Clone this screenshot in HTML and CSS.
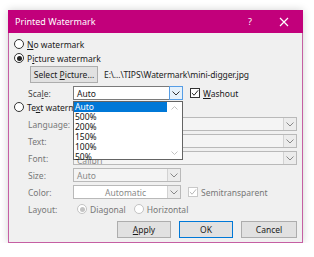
FILE: index.html
```html
<!DOCTYPE html>
<html>
<head>
<meta charset="utf-8">
<link rel="stylesheet" href="styles.css">
</head>
<body>
<div class="dialog">
  <div class="titlebar">
    <span class="title">Printed Watermark</span>
    <span class="tb-help">?</span>
    <svg class="tb-close" width="10" height="10" viewBox="0 0 10 10"><path d="M1 1L9 9M9 1L1 9" stroke="#fff" stroke-width="1.2"/></svg>
  </div>
  <div class="content">
    <div class="row radio-row">
      <span class="radio"></span><span><u>N</u>o watermark</span>
    </div>
    <div class="row radio-row">
      <span class="radio on"></span><span>P<u>i</u>cture watermark</span>
    </div>
    <div class="row pic-row">
      <button class="btn sel-btn">Select <u>P</u>icture...</button>
      <span class="path">E:\...\TIPS\Watermark\mini-digger.jpg</span>
    </div>
    <div class="row field-row">
      <span class="lbl">Sca<u>l</u>e:</span>
      <div class="combo scale active">
        <span class="cval">Auto</span>
        <span class="carrow hot"><svg width="8" height="5" viewBox="0 0 8 5"><path d="M0.5 0.5L4 4L7.5 0.5" fill="none" stroke="#333" stroke-width="1"/></svg></span>
      </div>
      <span class="check on"><svg width="9" height="8" viewBox="0 0 9 8"><path d="M1 4L3.5 6.5L8 1" fill="none" stroke="#222" stroke-width="1.1"/></svg></span>
      <span><u>W</u>ashout</span>
    </div>
    <div class="row radio-row">
      <span class="radio"></span><span class="clip-txt">Te<u>x</u>t waterma</span>
    </div>
    <div class="row field-row dis">
      <span class="lbl">Language:</span>
      <div class="combo wide"><span class="cval"></span><span class="carrow"><svg width="8" height="5" viewBox="0 0 8 5"><path d="M0.5 0.5L4 4L7.5 0.5" fill="none" stroke="#888" stroke-width="1"/></svg></span></div>
    </div>
    <div class="row field-row dis">
      <span class="lbl">Text:</span>
      <div class="combo wide"><span class="cval"></span><span class="carrow"><svg width="8" height="5" viewBox="0 0 8 5"><path d="M0.5 0.5L4 4L7.5 0.5" fill="none" stroke="#888" stroke-width="1"/></svg></span></div>
    </div>
    <div class="row field-row dis">
      <span class="lbl">Font:</span>
      <div class="combo wide"><span class="cval font-val">Calibri</span><span class="carrow"><svg width="8" height="5" viewBox="0 0 8 5"><path d="M0.5 0.5L4 4L7.5 0.5" fill="none" stroke="#888" stroke-width="1"/></svg></span></div>
    </div>
    <div class="row field-row dis">
      <span class="lbl">Size:</span>
      <div class="combo short"><span class="cval">Auto</span><span class="carrow"><svg width="8" height="5" viewBox="0 0 8 5"><path d="M0.5 0.5L4 4L7.5 0.5" fill="none" stroke="#888" stroke-width="1"/></svg></span></div>
    </div>
    <div class="row field-row dis">
      <span class="lbl">Color:</span>
      <div class="combo short white"><span class="cval center">Automatic</span><span class="carrow"><svg width="8" height="5" viewBox="0 0 8 5"><path d="M0.5 0.5L4 4L7.5 0.5" fill="none" stroke="#888" stroke-width="1"/></svg></span></div>
      <span class="check dim"><svg width="9" height="8" viewBox="0 0 9 8"><path d="M1 4L3.5 6.5L8 1" fill="none" stroke="#b5b5b5" stroke-width="1.1"/></svg></span>
      <span>Semitransparent</span>
    </div>
    <div class="row field-row dis">
      <span class="lbl">Layout:</span>
      <span class="layout-opt"><span class="radio dim on"></span>Diagonal</span>
      <span class="layout-opt"><span class="radio dim"></span>Horizontal</span>
    </div>
    <div class="row btn-row">
      <button class="btn act"><u>A</u>pply</button>
      <button class="btn act def">OK</button>
      <button class="btn act cancel">Cancel</button>
    </div>
  </div>
  <div class="droplist">
    <div class="items">
      <div class="item selected">Auto</div>
      <div class="item">500%</div>
      <div class="item">200%</div>
      <div class="item">150%</div>
      <div class="item">100%</div>
      <div class="item">50%</div>
    </div>
    <div class="scrollbar">
      <svg width="7" height="4" viewBox="0 0 7 4"><path d="M0.5 3.5L3.5 0.5L6.5 3.5" fill="none" stroke="#c2c2c2" stroke-width="1"/></svg>
      <svg width="7" height="4" viewBox="0 0 7 4"><path d="M0.5 0.5L3.5 3.5L6.5 0.5" fill="none" stroke="#c2c2c2" stroke-width="1"/></svg>
    </div>
  </div>
</div>
</body>
</html>
```
FILE: styles.css
```css
* { box-sizing: border-box; }
html, body { margin: 0; padding: 0; background: #fff; }
body {
  font-family: "Noto Sans", "DejaVu Sans", sans-serif;
  font-size: 8.5px;
  color: #1a1a1a;
  padding: 10px 0 0 8px;
}
u { text-decoration: underline; text-underline-offset: 1px; }
.dialog {
  position: relative;
  width: 295px;
  height: 233px;
  background: #f0f0f0;
  border: 1px solid #c55fa3;
  border-top: none;
  box-shadow: 0 0 8px rgba(0,0,0,0.18);
}
.titlebar {
  height: 23px;
  background: #c2007b;
  color: #fff;
  display: flex;
  align-items: center;
  padding-left: 7px;
  margin: 0 -1px;
}
.title { font-size: 9px; flex: 1; }
.tb-help { font-size: 9px; margin-right: 27px; }
.tb-close { margin-right: 14px; }
.content {
  padding: 4px 0 0 5px;
  display: flex;
  flex-direction: column;
}
.row { display: flex; align-items: center; }
.radio-row { height: 14px; gap: 3px; }
.radio {
  width: 10px; height: 10px;
  border: 1px solid #333;
  border-radius: 50%;
  background: #fff;
  display: inline-flex;
  align-items: center; justify-content: center;
  flex: none;
}
.radio.on::after {
  content: ""; width: 5px; height: 5px; border-radius: 50%; background: #222;
}
.radio.dim { border-color: #c3c3c3; }
.radio.dim.on::after { background: #c3c3c3; }
.clip-txt { white-space: nowrap; }
.pic-row { margin-top: 1px; height: 17px; padding-left: 16px; gap: 6px; }
.btn {
  font-family: inherit;
  font-size: 8.5px;
  color: #1a1a1a;
  background: #e1e1e1;
  border: 1px solid #adadad;
  padding: 0;
  height: 17px;
}
.sel-btn { width: 68px; }
.path { color: #222; letter-spacing: -0.1px; }
.field-row { height: 14px; margin-top: 3px; padding-left: 14px; }
.lbl { width: 45px; flex: none; color: #444; }
.dis .lbl, .dis { color: #777; }
.combo {
  height: 14px;
  border: 1px solid #b9b9b9;
  background: #f4f4f4;
  display: flex;
  align-items: center;
  position: relative;
}
.combo.scale { width: 110px; background: #fff; border-color: #7a7a7a; }
.combo.wide { width: 224px; }
.combo.short { width: 108px; }
.combo.white { background: #fff; }
.cval { flex: 1; padding-left: 3px; white-space: nowrap; overflow: hidden; }
.font-val { padding-top: 5px; line-height: 1; height: 12px; }
.cval.center { text-align: center; padding-left: 10px; }
.dis .cval { color: #8a8a8a; }
.carrow {
  width: 13px; height: 12px;
  border-left: 1px solid #d2d2d2;
  display: flex; align-items: center; justify-content: center;
  flex: none;
  background: #ececec;
}
.carrow.hot { background: #e5f1fb; border: 1px solid #569de5; height: 14px; width: 14px; margin-right: -1px; }
.check {
  width: 10px; height: 10px;
  border: 1px solid #333;
  background: #fff;
  display: inline-flex; align-items: center; justify-content: center;
  margin-left: 7px; margin-right: 3px;
}
.check.dim { border-color: #c8c8c8; margin-left: 7px; }
.layout-opt { display: inline-flex; align-items: center; gap: 3px; margin-left: 4px; margin-right: 4px; color: #777; }
.btn-row { margin-top: 5px; height: 17px; padding-left: 103px; gap: 8px; }
.btn.act { width: 54px; }
.btn.cancel { width: 56px; }
.btn.def { border-color: #0078d7; }
.droplist {
  position: absolute;
  left: 64px; top: 91px;
  width: 110px; height: 59px;
  background: #fff;
  border: 1px solid #646464;
  display: flex;
}
.items { flex: 1; }
.item { height: 10px; line-height: 10px; padding-left: 1px; color: #111; }
.item.selected { background: #0078d7; color: #fff; }
.scrollbar {
  width: 15px;
  display: flex; flex-direction: column; justify-content: space-between; align-items: center;
  padding: 4px 0 4px;
}
```
